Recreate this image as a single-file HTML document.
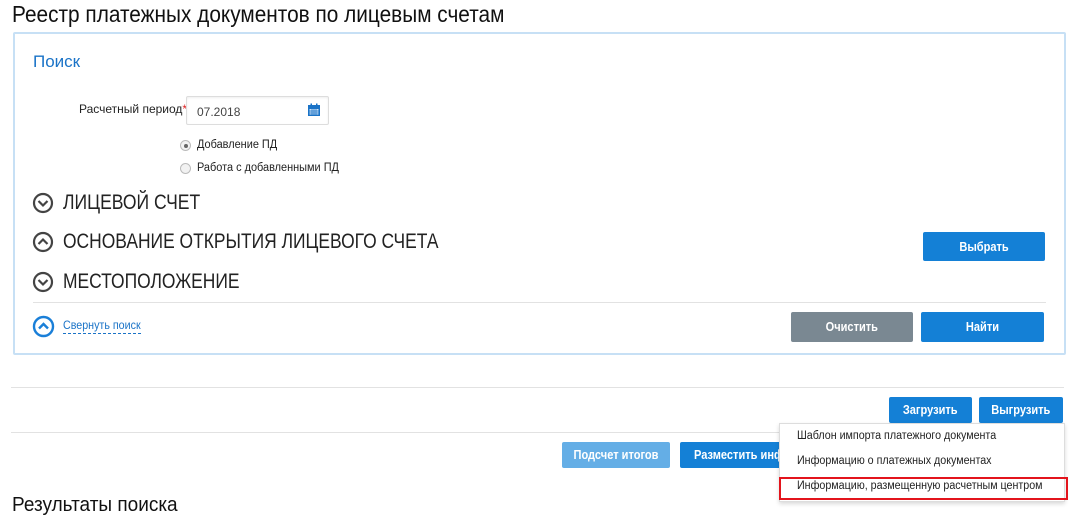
<!DOCTYPE html>
<html><head><meta charset="utf-8"><style>
body{margin:0;width:1083px;height:521px;overflow:hidden;background:#fff;font-family:"Liberation Sans",sans-serif;position:relative;color:#222}
.a{position:absolute;white-space:nowrap}
.sx{transform-origin:0 50%;display:inline-block}
.btn{position:absolute;color:#fff;font-size:13px;font-weight:bold;text-align:center;border-radius:2px;box-sizing:border-box;white-space:nowrap}
.btn span{display:inline-block;transform:scaleX(.85)}
.line{position:absolute;height:1px;background:#e2e2e2}
.h{font-size:21px;color:#222}
.dd{font-size:11.5px;color:#222}
.dd span{display:inline-block;transform:scaleX(.93);transform-origin:0 50%}
</style></head><body>
<div class="a" style="left:12px;top:1px;font-size:23px;color:#111"><span class="sx" style="transform:scaleX(.905)">Реестр платежных документов по лицевым счетам</span></div>
<div class="a" style="left:13px;top:32px;width:1049px;height:319px;border:2px solid #c7e0f5;border-radius:2px"></div>
<div class="a" style="left:33px;top:52px;font-size:17px;color:#1a73c7">Поиск</div>
<div class="a" style="left:79px;top:102px;font-size:12px;color:#222">Расчетный период<span style="color:#d22">*</span></div>
<div class="a" style="left:186px;top:96px;width:141px;height:27px;border:1px solid #ddd;border-radius:2px;box-shadow:inset 0 1px 2px #eee"></div>
<div class="a" style="left:197px;top:105px;font-size:12px;color:#444">07.2018</div>
<svg class="a" style="left:307px;top:103px" width="14" height="14" viewBox="0 0 14 14"><rect x="1" y="2" width="12" height="11" fill="#1a73c7"/><rect x="2.5" y="6" width="9" height="5.5" fill="#cfe3f7"/><path d="M2.5 8h9M2.5 10h9M5 6v6M7 6v6M9 6v6" stroke="#1a73c7" stroke-width=".7"/><rect x="3.5" y="0.5" width="1.5" height="3" fill="#1a73c7"/><rect x="9" y="0.5" width="1.5" height="3" fill="#1a73c7"/></svg>
<div class="a" style="left:180px;top:140px;width:9px;height:9px;border:1px solid #bbb;border-radius:50%;background:#f2f2f2"><div style="width:4px;height:4px;margin:2.5px;border-radius:50%;background:#666"></div></div>
<div class="a" style="left:180px;top:163px;width:9px;height:9px;border:1px solid #bbb;border-radius:50%;background:#f2f2f2"></div>
<div class="a" style="left:197px;top:139px;font-size:11.5px"><span class="sx" style="transform:scaleX(.95)">Добавление ПД</span></div>
<div class="a" style="left:197px;top:162px;font-size:11.5px"><span class="sx" style="transform:scaleX(.95)">Работа с добавленными ПД</span></div>
<svg class="a" style="left:32px;top:192px" width="22" height="22"><circle cx="11" cy="11" r="9" fill="none" stroke="#444" stroke-width="2.2"/><path d="M6.5 9l4.5 4.5 4.5-4.5" fill="none" stroke="#444" stroke-width="2.2"/></svg>
<svg class="a" style="left:32px;top:231px" width="22" height="22"><circle cx="11" cy="11" r="9" fill="none" stroke="#444" stroke-width="2.2"/><path d="M6.5 13l4.5-4.5 4.5 4.5" fill="none" stroke="#444" stroke-width="2.2"/></svg>
<svg class="a" style="left:32px;top:271px" width="22" height="22"><circle cx="11" cy="11" r="9" fill="none" stroke="#444" stroke-width="2.2"/><path d="M6.5 9l4.5 4.5 4.5-4.5" fill="none" stroke="#444" stroke-width="2.2"/></svg>
<div class="a h" style="left:63px;top:191px"><span class="sx" style="transform:scaleX(.835)">ЛИЦЕВОЙ СЧЕТ</span></div>
<div class="a h" style="left:63px;top:230px"><span class="sx" style="transform:scaleX(.83)">ОСНОВАНИЕ ОТКРЫТИЯ ЛИЦЕВОГО СЧЕТА</span></div>
<div class="a h" style="left:63px;top:270px"><span class="sx" style="transform:scaleX(.83)">МЕСТОПОЛОЖЕНИЕ</span></div>
<div class="btn" style="left:923px;top:232px;width:122px;height:29px;line-height:29px;background:#1480d6"><span>Выбрать</span></div>
<div class="line" style="left:33px;top:302px;width:1013px"></div>
<svg class="a" style="left:32px;top:315px" width="23" height="23"><circle cx="11.5" cy="11.5" r="9.5" fill="none" stroke="#1a7fd8" stroke-width="2.4"/><path d="M7 13.5l4.5-4.5 4.5 4.5" fill="none" stroke="#1a7fd8" stroke-width="2.4"/></svg>
<div class="a" style="left:63px;top:319px;font-size:11.5px;color:#1a73c7;border-bottom:1px dashed #1a73c7;line-height:14px;width:78px;overflow:visible"><span class="sx" style="transform:scaleX(.93)">Свернуть поиск</span></div>
<div class="btn" style="left:791px;top:312px;width:122px;height:30px;line-height:30px;background:#7a8892"><span>Очистить</span></div>
<div class="btn" style="left:921px;top:312px;width:123px;height:30px;line-height:30px;background:#1480d6"><span>Найти</span></div>
<div class="line" style="left:11px;top:387px;width:1053px"></div>
<div class="btn" style="left:889px;top:397px;width:83px;height:26px;line-height:26px;background:#1480d6"><span>Загрузить</span></div>
<div class="btn" style="left:979px;top:397px;width:84px;height:26px;line-height:26px;background:#1480d6"><span>Выгрузить</span></div>
<div class="line" style="left:11px;top:432px;width:768px"></div>
<div class="btn" style="left:562px;top:442px;width:108px;height:26px;line-height:26px;background:#64aee6"><span>Подсчет итогов</span></div>
<div class="btn" style="left:680px;top:442px;width:110px;height:26px;line-height:26px;background:#1480d6;text-align:left;padding-left:14px;overflow:hidden"><span style="transform-origin:0 50%">Разместить информацию</span></div>
<div class="a" style="left:779px;top:423px;width:284px;height:77px;background:#fff;border:1px solid #ddd;box-shadow:0 2px 4px rgba(0,0,0,.15)"></div>
<div class="a dd" style="left:797px;top:430px"><span>Шаблон импорта платежного документа</span></div>
<div class="a dd" style="left:797px;top:455px"><span>Информацию о платежных документах</span></div>
<div class="a dd" style="left:797px;top:480px"><span>Информацию, размещенную расчетным центром</span></div>
<div class="a" style="left:779px;top:477px;width:285px;height:19px;border:2px solid #e3141c"></div>
<div class="a" style="left:12px;top:494px;font-size:20px;color:#111"><span class="sx" style="transform:scaleX(.95)">Результаты поиска</span></div>
</body></html>
